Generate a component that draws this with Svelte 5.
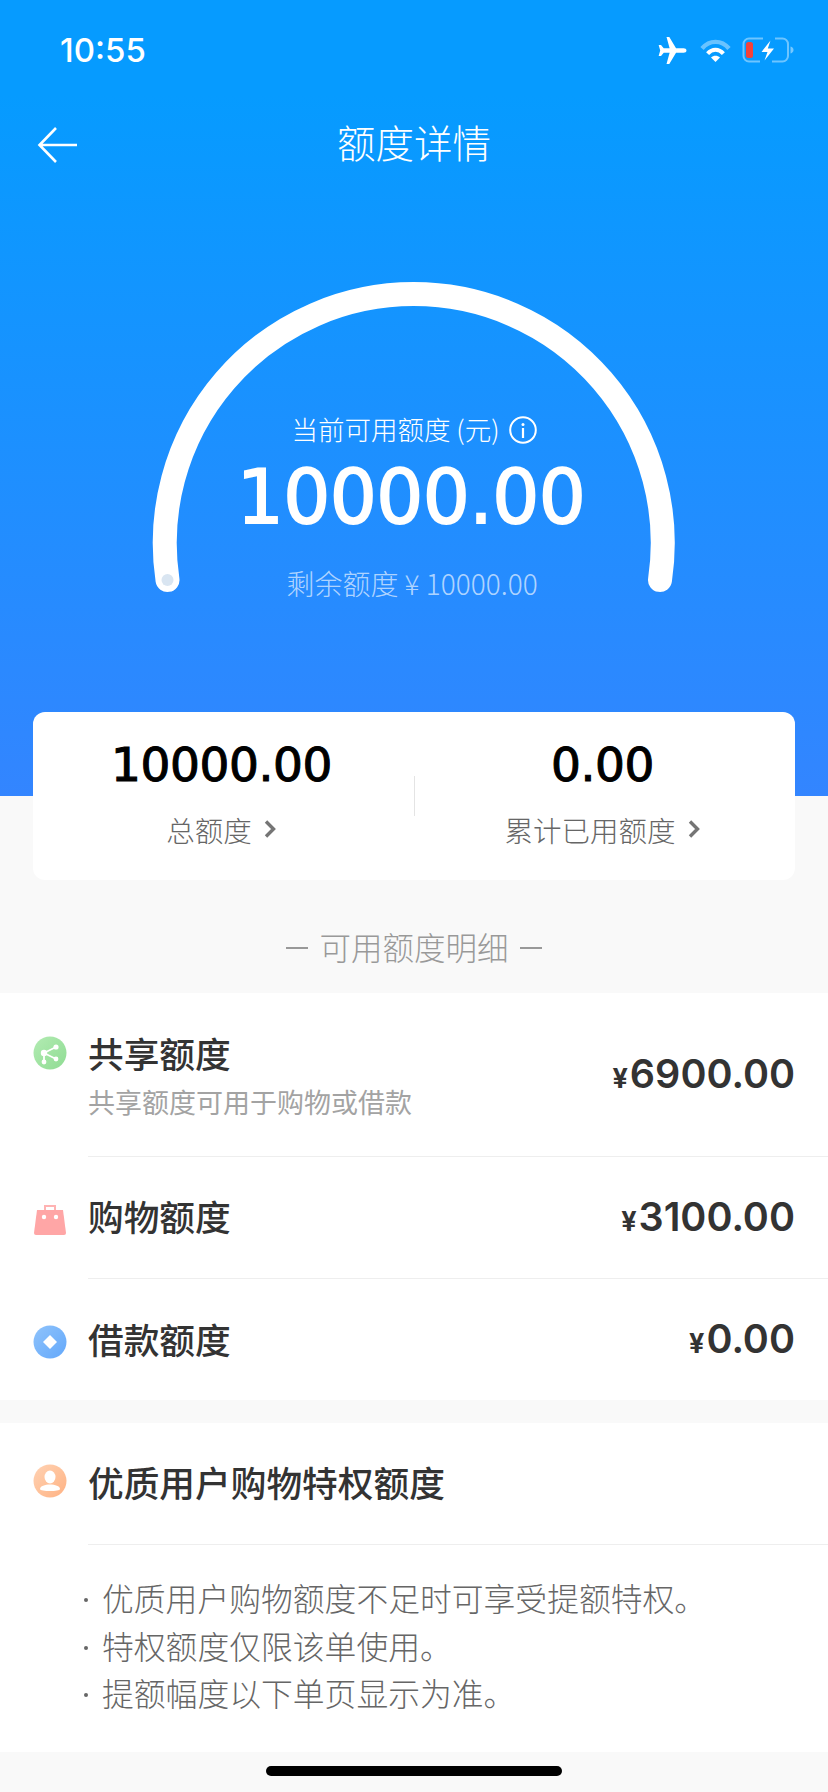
<script>
  const stats = [
    { value: '10000.00', label: '总额度' },
    { value: '0.00', label: '累计已用额度' }
  ];
  const notes = ['优质用户购物额度不足时可享受提额特权。', '特权额度仅限该单使用。', '提额幅度以下单页显示为准。'];
</script>

<div class="page">
  <section class="hero">
    <div class="status">
      <span class="time">10:55</span>
      <div class="status-icons">
        <svg class="plane" viewBox="0 0 29 26" width="30" height="27">
          <path fill="#fff" d="M28.500 13c0 1.400-1.300 2.200-2.800 2.200h-7.300L11.900 26H9.200l3-10.800H6.500l-2.600 3.100H1.600L3.100 13 1.600 7.700h2.300l2.600 3.100h5.700L9.200 0h2.700l6.500 10.800h7.300c1.500 0 2.800.8 2.800 2.200z"/>
        </svg>
        <svg class="wifi" viewBox="0 0 31 24" width="31" height="24">
          <path d="M2 10.500C9.500 1.600 21.500 1.600 29 10.500" fill="none" stroke="#fff" stroke-opacity=".4" stroke-width="4.400"/>
          <path d="M7.600 15.600C12.200 10.400 18.800 10.400 23.400 15.600" fill="none" stroke="#fff" stroke-width="4"/>
          <path d="M11 19.400c2.600-2.200 6.400-2.200 9 0l-4.500 4.600z" fill="#fff"/>
        </svg>
        <svg class="battery" viewBox="0 0 52 26" width="52" height="26">
          <path d="M21 1.500H7A5.500 5.500 0 0 0 1.500 7v12A5.500 5.500 0 0 0 7 24.500h11M30 24.500h10.500A5.500 5.500 0 0 0 46 19V7a5.500 5.500 0 0 0-5.500-5.500H33" fill="none" stroke="#fff" stroke-opacity=".42" stroke-width="2"/>
          <rect x="4" y="5" width="7" height="16" rx="2.500" fill="#f4413a"/>
          <path d="M28.500 3.500 19.500 15h6l-3 8.500 9.500-12h-6.200z" fill="#fff"/>
          <path d="M48.500 9.500c2 .6 3 1.900 3 3.500s-1 2.900-3 3.500z" fill="#fff" fill-opacity=".45"/>
        </svg>
      </div>
    </div>
    <header class="nav">
      <svg class="back" viewBox="0 0 42 38" width="42" height="38">
        <path d="M40 19H3M19 2 2.500 19 19 36" fill="none" stroke="#fff" stroke-width="2.600"/>
      </svg>
      <h1>额度详情</h1>
    </header>
    <div class="gauge">
      <svg class="arc" viewBox="0 0 540 330" width="540" height="330">
        <path d="M27.500 298A249 249 0 1 1 520 298" fill="none" stroke="#fff" stroke-width="24" stroke-linecap="round"/>
        <circle cx="27.500" cy="298" r="6" fill="#d9e5f1"/>
      </svg>
      <div class="gauge-label">
        <span>当前可用额度 (元)</span>
        <svg viewBox="0 0 28 28" width="28" height="28">
          <circle cx="14" cy="14" r="12.800" fill="none" stroke="#fff" stroke-width="2"/>
          <circle cx="14" cy="8.500" r="1.500" fill="#fff"/>
          <rect x="12.900" y="12" width="2.200" height="10" fill="#fff"/>
        </svg>
      </div>
      <div class="gauge-value">10000.00</div>
      <div class="gauge-left">剩余额度 ¥ 10000.00</div>
    </div>
  </section>

  <div class="card">
    {#each stats as s, i}
      <div class="stat" class:split={i === 1}>
        <div class="stat-value">{s.value}</div>
        <div class="stat-label">
          <span>{s.label}</span>
          <svg viewBox="0 0 13 20" width="13" height="20"><path d="M2 2.500l7.500 7.500L2 17.500" fill="none" stroke="#757575" stroke-width="3.400"/></svg>
        </div>
      </div>
    {/each}
  </div>

  <div class="section-title">
    <i></i><span>可用额度明细</span><i></i>
  </div>

  <section class="list">
    <div class="row first">
      <svg class="icon" viewBox="0 0 34 34" width="34" height="34">
        <defs><linearGradient id="g1" x1="0" y1="0" x2="1" y2="1"><stop offset="0" stop-color="#b2ebb2"/><stop offset="1" stop-color="#8fdc93"/></linearGradient></defs>
        <circle cx="17" cy="17" r="16.500" fill="url(#g1)"/>
        <path d="M11 17 23 11M11 17l12 6M11 17l0 8" stroke="#fff" stroke-width="1.800" fill="none"/>
        <circle cx="11" cy="17" r="3.200" fill="#fff"/><circle cx="23" cy="11" r="2.600" fill="#fff"/><circle cx="23" cy="23" r="2.400" fill="#fff"/><circle cx="11" cy="26" r="2.400" fill="#fff"/>
      </svg>
      <div class="body">
        <div class="text">
          <div class="name">共享额度</div>
          <div class="sub">共享额度可用于购物或借款</div>
        </div>
        <div class="amount"><small>¥</small>6900.00</div>
      </div>
    </div>
    <div class="row second">
      <svg class="icon" viewBox="0 0 34 34" width="34" height="34">
        <path d="M12 7V3h10v4" fill="none" stroke="#ffb3b3" stroke-width="2"/>
        <path d="M4 7h26l3 23a2 2 0 0 1-2 2H3a2 2 0 0 1-2-2z" fill="#ffa6a6"/>
        <circle cx="11" cy="14" r="2.200" fill="#fff"/><circle cx="23" cy="14" r="2.200" fill="#fff"/>
      </svg>
      <div class="body">
        <div class="name">购物额度</div>
        <div class="amount"><small>¥</small>3100.00</div>
      </div>
    </div>
    <div class="row third">
      <svg class="icon" viewBox="0 0 34 34" width="34" height="34">
        <defs><linearGradient id="g3" x1="0" y1="0" x2="1" y2="1"><stop offset="0" stop-color="#8fc3fb"/><stop offset="1" stop-color="#63a8fb"/></linearGradient></defs>
        <circle cx="17" cy="17" r="16.500" fill="url(#g3)"/>
        <path d="M17 10l7 7-7 7-7-7z" fill="#fff"/>
      </svg>
      <div class="body">
        <div class="name">借款额度</div>
        <div class="amount"><small>¥</small>0.00</div>
      </div>
    </div>
  </section>

  <section class="privilege">
    <div class="row head">
      <svg class="icon" viewBox="0 0 34 34" width="34" height="34">
        <defs><linearGradient id="g4" x1="0" y1="0" x2="1" y2="1"><stop offset="0" stop-color="#ffd2b3"/><stop offset="1" stop-color="#ffb283"/></linearGradient></defs>
        <circle cx="17" cy="17" r="16.500" fill="url(#g4)"/>
        <ellipse cx="17" cy="13" rx="5.500" ry="6.500" fill="#fff"/>
        <path d="M7 25c0-3 5-4.500 10-4.500s10 1.500 10 4.500c0 1.500-5 2-10 2s-10-.5-10-2z" fill="#fff"/>
      </svg>
      <div class="body"><div class="name">优质用户购物特权额度</div></div>
    </div>
    <ul class="notes">
      {#each notes as n}<li>{n}</li>{/each}
    </ul>
  </section>

  <footer class="home"><span></span></footer>
</div>

<style>
  :global(body) { margin: 0; background: #f9f9f9; }
  .page {
    width: 828px;
    height: 1792px;
    overflow: hidden;
    background: #f9f9f9;
    font-family: "Noto Sans CJK SC", "Liberation Sans", sans-serif;
    color: #333;
  }
  .hero {
    height: 796px;
    background: linear-gradient(180deg, #069bff 0%, #069bff 12%, #3385ff 100%);
    color: #fff;
  }
  .status {
    height: 100px;
    padding: 0 34px 0 60px;
    box-sizing: border-box;
    display: flex;
    align-items: center;
    justify-content: space-between;
  }
  .time { font: 500 33px/1 Inter, "Liberation Sans", sans-serif; }
  .status-icons { display: flex; align-items: center; gap: 11px; }
  .plane { margin-right: 2px; }
  .nav {
    height: 90px;
    position: relative;
    display: flex;
    align-items: center;
    justify-content: center;
  }
  .back { position: absolute; left: 37px; top: 26px; }
  h1 { margin: -9px 0 0; font-size: 38.500px; font-weight: 300; line-height: 56px; }
  .gauge {
    position: relative;
    padding-top: 218px;
    text-align: center;
  }
  .arc { position: absolute; left: 140px; top: 92px; }
  .gauge-label {
    position: relative;
    height: 40px;
    display: flex;
    align-items: center;
    justify-content: center;
    gap: 9px;
    font-size: 26.500px;
    font-weight: 300;
  }
  .gauge-label svg { margin-top: 4px; }
  .gauge-value {
    position: relative;
    margin-top: 4px;
    padding-right: 6px;
    font: 400 74px/90px "DejaVu Sans", sans-serif;
    letter-spacing: -.6px;
    -webkit-text-stroke: 1.800px #fff;
  }
  .gauge-left {
    position: relative;
    margin-top: 21px;
    padding-right: 4px;
    font-size: 28px;
    font-weight: 300;
    line-height: 40px;
    color: rgba(255, 255, 255, .65);
  }
  .card {
    margin: -84px 33px 0;
    height: 168px;
    position: relative;
    background: #fff;
    border-radius: 12px;
    display: flex;
  }
  .stat { flex: 1; text-align: center; padding-top: 25px; position: relative; }
  .split::before {
    content: "";
    position: absolute;
    left: 0;
    top: 64px;
    height: 40px;
    border-left: 1px solid #e4e4e4;
  }
  .stat-value {
    padding-right: 4px;
    font: 400 47px/56px "DejaVu Sans", sans-serif;
    letter-spacing: -.4px;
    -webkit-text-stroke: 1.100px #000;
    color: #000;
  }
  .stat-label {
    margin-top: 16px;
    padding-right: 4px;
    height: 40px;
    display: flex;
    align-items: center;
    justify-content: center;
    gap: 12px;
    font-size: 28.500px;
    font-weight: 300;
    color: #666;
  }
  .section-title {
    height: 113px;
    padding-top: 46px;
    box-sizing: border-box;
    display: flex;
    justify-content: center;
    align-items: flex-start;
    gap: 11px;
    font-size: 31.500px;
    font-weight: 300;
    line-height: 40px;
    color: #999;
  }
  .section-title i { width: 22px; height: 2px; margin-top: 21px; background: #999; }
  .list, .privilege { background: #fff; }
  .list { height: 407px; }
  .privilege { margin-top: 23px; height: 329px; }
  .row { display: flex; padding-left: 33px; gap: 21px; }
  .icon { flex: none; }
  .body {
    flex: 1;
    display: flex;
    align-items: center;
    justify-content: space-between;
    padding-right: 33px;
    border-bottom: 1px solid #eee;
    box-sizing: border-box;
  }
  .first { height: 164px; }
  .first .icon { margin-top: 43px; }
  .second { height: 122px; }
  .second .icon { margin-top: 46px; }
  .second .body { height: 122px; }
  .second .name { margin-top: -4px; }
  .third { height: 121px; }
  .third .icon { margin-top: 46px; }
  .third .body { border-bottom: none; }
  .name { margin-top: -2px; font-size: 35.700px; font-weight: 500; line-height: 44px; color: #333; }
  .text { padding-top: 2px; }
  .text .name { margin-top: 0; }
  .sub { margin-top: 9px; font-size: 27px; font-weight: 400; line-height: 36px; color: #a3a3a3; }
  .amount { padding-top: 4px; font: 600 39.500px/50px Inter, sans-serif; color: #333; }
  .amount small { font-size: 27px; font-weight: 700; margin-right: 2px; }
  .head { height: 122px; }
  .head .name { margin-top: -4px; }
  .head .icon { margin-top: 41px; }
  .notes {
    margin: 0;
    padding: 29px 0 0 102px;
    list-style: none;
    font-size: 31.800px;
    font-weight: 300;
    line-height: 47.500px;
    color: #666;
  }
  .notes li { position: relative; }
  .notes li::before {
    content: "";
    position: absolute;
    left: -18px;
    top: 24px;
    width: 4px;
    height: 4px;
    border-radius: 50%;
    background: #666;
  }
  .home { padding-top: 14px; display: flex; justify-content: center; }
  .home span { width: 296px; height: 10px; border-radius: 5px; background: #000; }
</style>
